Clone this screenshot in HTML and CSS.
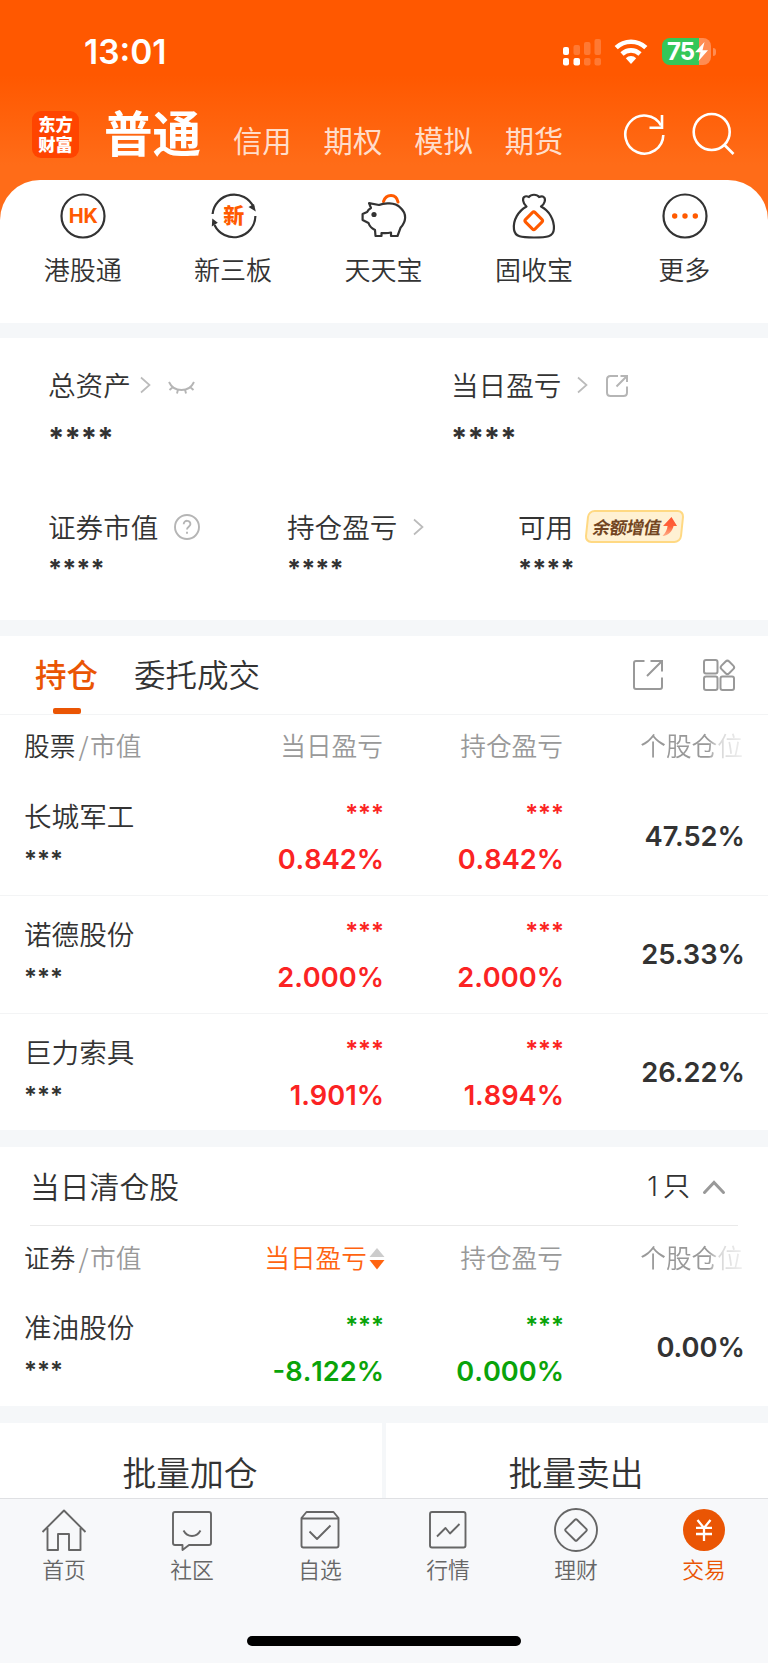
FILE: index.html
```html
<!DOCTYPE html>
<html lang="zh-CN">
<head>
<meta charset="utf-8">
<title>交易</title>
<link rel="stylesheet" href="styles.css">
</head>
<body>
<div class="app">
  <header class="hero">
    <div class="status">
      <span class="time">13:01</span>
      <div class="status-icons">
        <svg width="39" height="28" viewBox="0 0 39 28" fill="#fff"><rect x="1" y="9" width="6" height="8" rx="2"/><g opacity=".2"><rect x="11.500" y="7" width="6.500" height="10" rx="2"/><rect x="22" y="4" width="6.500" height="13" rx="2"/><rect x="32.500" y="1" width="6.500" height="16" rx="2"/><rect x="22" y="20" width="6.500" height="7.500" rx="2"/><rect x="32.500" y="20" width="6.500" height="7.500" rx="2"/></g><rect x="1" y="20" width="6" height="7.500" rx="2"/><rect x="11.500" y="20" width="6.500" height="7.500" rx="2"/></svg>
        <svg class="wifi" width="34" height="26" viewBox="0 0 34 26"><g fill="none" stroke="#fff" stroke-width="4.600"><path d="M2.200 8.700a21.500 21.500 0 0 1 29.600 0"/><path d="M8 15a13 13 0 0 1 18 0"/></g><path fill="#fff" d="M11.800 19.200a7.500 7.500 0 0 1 10.400 0L17 25z"/></svg>
        <div class="battery"><span>75</span><svg width="13" height="19" viewBox="0 0 13 19"><path fill="#fff" d="M9.500 0 0 10.300h5.500L3.500 19 13 8.300H7.500z"/></svg></div><i class="battery-tip"></i>
      </div>
    </div>
    <div class="topnav">
      <div class="logo">东方<br>财富</div>
      <b class="current">普通</b>
      <nav class="modes"><span>信用</span><span>期权</span><span>模拟</span><span>期货</span></nav>
      <svg class="refresh" width="44" height="44" viewBox="0 0 44 44" fill="none" stroke="#fff" stroke-width="2.600"><path d="M40.300 23A19 19 0 1 1 38 13.500"/><path d="M39 3v12.800H26.500"/></svg>
      <svg width="44" height="44" viewBox="0 0 44 44" fill="none" stroke="#fff" stroke-width="2.600"><circle cx="19.700" cy="20" r="18"/><path d="m32 32.500 9.500 9.500"/></svg>
    </div>
  </header>

  <section class="shortcuts">
    <div class="shortcut">
      <svg viewBox="0 0 46 46"><circle cx="23" cy="23" r="21.500" fill="none" stroke="#333" stroke-width="2.200"/><text x="23.300" y="30.300" class="hk">HK</text></svg><span>港股通</span></div>
    <div class="shortcut">
      <svg viewBox="0 0 46 46"><g fill="none" stroke="#333" stroke-width="2.200"><path d="M1.600 21A21.500 21.500 0 0 1 42.500 14"/><path d="M44.400 23A21.500 21.500 0 0 1 3.500 32"/></g><path fill="#333" d="m37.500 14 5.500-3 1.800 7.500zM.8 33.500 1.300 25.500l5.500 4.200z"/><text x="22.800" y="30.200" class="xin">新</text></svg><span>新三板</span></div>
    <div class="shortcut">
      <svg viewBox="0 0 46 46"><path fill="none" stroke="#ff5a00" stroke-width="3" stroke-linecap="round" d="M22.500 8.500C25 1 35 0 37 9"/><path fill="none" stroke="#333" stroke-width="2.200" stroke-linejoin="round" d="M8 10.200 18 12c5-2.300 16-2.700 21 2.300 7.500 6.500 6 14.500.5 20.500L36.500 43H30v-3.500c-3 .8-6.500.8-9.500.5V43h-6l-.5-6c-4-2-5.500-4-6.500-7L1.600 27v-6l4.500-2C7 17 8.500 15.800 10 15z"/><circle cx="13" cy="21.500" r="2.600" fill="#333"/></svg><span>天天宝</span></div>
    <div class="shortcut">
      <svg viewBox="0 0 46 46" fill="none" stroke-linejoin="round"><path stroke="#333" stroke-width="2.200" d="M15.500 13.500c-4-3.200-4.500-9-1.500-10 1.400-.6 3 0 4 .5 2-3 8-3 10 0 1.500-.7 3.500-1 4.700 0 2.600 2 .8 7.500-2.700 9.500 8 4 13.400 13 12.900 22.500-.5 8-7 8.500-19.900 8.500S4 44 3 36.500C1.700 27 7.500 18 15.500 13.500z"/><rect x="16" y="21" width="13.500" height="13.500" rx="2" transform="rotate(45 22.750 27.750)" stroke="#ff5a00" stroke-width="3"/></svg><span>固收宝</span></div>
    <div class="shortcut">
      <svg viewBox="0 0 46 46"><circle cx="23" cy="23" r="21.500" fill="none" stroke="#333" stroke-width="2.200"/><g fill="#ff5a00"><circle cx="12.700" cy="23" r="2.700"/><circle cx="23" cy="23" r="2.700"/><circle cx="33.300" cy="23" r="2.700"/></g></svg><span>更多</span></div>
  </section>

  <section class="assets">
    <div class="asset-top">
      <div class="asset">
        <div class="label">总资产<svg class="chev" viewBox="0 0 12 18"><path d="m2 1.500 8.500 7.500L2 16.500"/></svg><svg class="eye" width="27" height="16" viewBox="0 0 27 16"><path d="M1 2c2.500 5.500 7 8 12.500 8S23.500 7.500 26 2M5 7l-3.500 3M10 9.600 9 13.500M17 9.600l1 3.900M22 7l3.500 3"/></svg></div>
        <div class="stars">****</div>
      </div>
      <div class="asset">
        <div class="label">当日盈亏<svg class="chev gap-lg" viewBox="0 0 12 18"><path d="m2 1.500 8.500 7.500L2 16.500"/></svg><svg class="share" width="24" height="24" viewBox="0 0 24 24"><path d="M13 2H5.500Q2 2 2 5.500v13Q2 22 5.500 22h13q3.500 0 3.500-3.500V12.500M15.500 2H22v6M22 2 11.500 12.500"/></svg></div>
        <div class="stars">****</div>
      </div>
    </div>
    <div class="asset-bottom">
      <div class="asset"><div class="label">证券市值<svg class="help" width="28" height="28" viewBox="0 0 28 28"><circle cx="14" cy="14" r="12"/><path d="M10.700 11.200c0-4.600 7-4.400 6.700 0-.2 2.500-3.400 2.600-3.400 5.300"/><path d="M14 18.700v2"/></svg></div><div class="stars small">****</div></div>
      <div class="asset"><div class="label">持仓盈亏<svg class="chev gap-lg" viewBox="0 0 12 18"><path d="m2 1.500 8.500 7.500L2 16.500"/></svg></div><div class="stars small">****</div></div>
      <div class="asset"><div class="label">可用<div class="promo"><em>余额增值</em><svg width="16" height="20" viewBox="0 0 16 20"><defs><linearGradient id="up" x1="0" y1="1" x2="0" y2="0"><stop stop-color="#ffb08a"/><stop offset=".5" stop-color="#ff6238"/><stop offset="1" stop-color="#ff5330"/></linearGradient></defs><path fill="url(#up)" d="M8.500 0 15 9h-3.500C11 14 7.500 18.500 1.500 19 4.500 16 5.500 12 5.500 9H1z"/></svg></div></div><div class="stars small">****</div></div>
    </div>
  </section>

  <section class="positions">
    <div class="tabs">
      <div class="tab active">持仓</div><div class="tab">委托成交</div>
      <svg class="tab-tool" width="32" height="32" viewBox="0 0 32 32"><path d="M12.500 2H4Q2 2 2 4v24q0 2 2 2h24q2 0 2-2V18.500M18.500 2H30v10.500M30 2 15 17"/></svg>
      <svg width="34" height="34" viewBox="0 0 34 34"><rect x="2" y="2" width="13.500" height="13.500" rx="2"/><rect x="2" y="18.500" width="13.500" height="13.500" rx="2"/><rect x="18.500" y="18.500" width="13.500" height="13.500" rx="2"/><rect x="20" y="4" width="10.800" height="10.800" rx="2.500" transform="rotate(45 25.400 9.400)"/></svg>
    </div>
    <div class="thead"><span><b>股票</b><i>/</i>市值</span><span>当日盈亏</span><span>持仓盈亏</span><span class="fade">个股仓位</span></div>
    <div class="row red"><div class="stock">长城军工<i>***</i></div><div class="num"><i>***</i>0.842%</div><div class="num"><i>***</i>0.842%</div><div class="ratio">47.52%</div></div>
    <div class="row red"><div class="stock">诺德股份<i>***</i></div><div class="num"><i>***</i>2.000%</div><div class="num"><i>***</i>2.000%</div><div class="ratio">25.33%</div></div>
    <div class="row red"><div class="stock">巨力索具<i>***</i></div><div class="num"><i>***</i>1.901%</div><div class="num"><i>***</i>1.894%</div><div class="ratio">26.22%</div></div>
  </section>

  <section class="closed">
    <div class="closed-head"><span>当日清仓股</span><span class="count"><span>1</span>只</span><svg width="24" height="15" viewBox="0 0 24 15"><path d="m2.500 12.500 9.500-10 9.500 10"/></svg></div>
    <div class="thead"><span><b>证券</b><i>/</i>市值</span><span class="sorted">当日盈亏<svg width="16" height="22" viewBox="0 0 16 22"><path fill="#ccc" d="m8 0 7.500 9H.5z"/><path fill="#ff6410" d="M.5 12h15L8 21.500z"/></svg></span><span>持仓盈亏</span><span class="fade">个股仓位</span></div>
    <div class="row green"><div class="stock">准油股份<i>***</i></div><div class="num"><i>***</i>-8.122%</div><div class="num"><i>***</i>0.000%</div><div class="ratio">0.00%</div></div>
  </section>

  <div class="batch"><div>批量加仓</div><div>批量卖出</div></div>

  <footer class="dock">
    <nav>
      <div><svg viewBox="0 0 46 46"><path d="M1.500 24 23 2.500 44.500 24M6.500 20v22H17V26h11v16h11.500V20"/></svg>首页</div>
      <div><svg viewBox="0 0 46 46"><path d="M6 4h34q2 0 2 2v29q0 2-2 2H20l-6.500 5v-5H6q-2 0-2-2V6q0-2 2-2zM14.500 22.500c4 7.300 13 7.300 17 0"/></svg>社区</div>
      <div><svg viewBox="0 0 46 46"><path d="M9.500 4h27l5 6v27.500q0 2-2 2h-33q-2 0-2-2V10zM4.500 10.500h37M12.500 23.500l7.500 7.500 13.500-13.500"/></svg>自选</div>
      <div><svg viewBox="0 0 46 46"><rect x="5" y="4" width="35.500" height="35.500" rx="2"/><path d="m12 28.500 8.500-8.500 4.500 5.500L34.500 16"/></svg>行情</div>
      <div><svg viewBox="0 0 46 46"><circle cx="23" cy="22" r="21"/><rect x="15" y="14" width="16" height="16" rx="1.500" transform="rotate(45 23 22)"/></svg>理财</div>
      <div class="on"><svg viewBox="0 0 46 46"><circle class="disc" cx="23" cy="22" r="21"/><path class="yen" d="m16.500 12 6.500 8 6.500-8M23 20v13M15 19.800h16M15 26h16"/></svg>交易</div>
    </nav>
    <div class="home-bar"></div>
  </footer>
</div>
</body>
</html>
```

FILE: styles.css
```css
* { box-sizing: border-box; }
body { margin: 0; font-family: "Noto Sans CJK SC", sans-serif; font-weight: 350; color: #333; background: #fff; }
i { font-style: normal; }
svg { display: block; flex: none; }
.app { width: 768px; height: 1663px; overflow: hidden; display: flex; flex-direction: column; white-space: nowrap; }

.hero { height: 220px; flex: none; background: linear-gradient(#ff5800 0, #ff5800 75px, #ff6c18 165px, #ff6c18); color: #fff; }
.status { height: 101px; padding: 2px 52px 0 84px; display: flex; align-items: center; justify-content: space-between; }
.time { font: 600 33.500px/40px Inter, sans-serif; }
.status-icons { display: flex; align-items: center; height: 40px; }
.wifi { margin-left: 13px; }
.battery { width: 49px; height: 27px; margin-left: 14px; border-radius: 8px; background: linear-gradient(90deg, #34c759 37px, #ff8c52 37px); display: flex; align-items: center; padding-left: 5px; }
.battery span { font: 700 24px/27px Inter, sans-serif; letter-spacing: -1px; width: 28px; }
.battery-tip { width: 3px; height: 8px; margin-left: 2px; border-radius: 0 3px 3px 0; background: #ff8c52; }
.topnav { height: 64px; padding: 2px 32px 0; display: flex; align-items: center; }
.logo { width: 47px; height: 47px; border-radius: 9px; background: #ff4400; padding-top: 3px; text-align: center; font-weight: 900; font-size: 17.300px; line-height: 20px; }
.current { font-weight: 700; font-size: 48.500px; line-height: 60px; margin: -7px 0 0 25px; }
.modes { display: flex; gap: 32px; margin-left: 32px; padding-top: 10px; font-size: 29.300px; line-height: 40px; font-weight: 400; color: rgba(255,255,255,.8); }
.refresh { margin: 0 25px 0 auto; }

.shortcuts { height: 143px; margin-top: -40px; flex: none; background: #fff; border-radius: 40px 40px 0 0; padding: 13px 8px 0; display: grid; grid-template-columns: repeat(5, 1fr); }
.shortcut { display: flex; flex-direction: column; align-items: center; font-size: 26px; line-height: 36px; }
.shortcut svg { width: 46px; height: 46px; margin-bottom: 12px; }
.shortcut span { padding-right: 1px; }
.hk { font: 700 20px Inter, sans-serif; fill: #ff5a00; text-anchor: middle; }
.xin { font: 900 21px "Noto Sans CJK SC", sans-serif; fill: #ff5a00; text-anchor: middle; }

.assets { height: 313px; flex: none; border-top: 15px solid #f5f7f9; border-bottom: 16px solid #f5f7f9; padding: 27px 48px 0; }
.assets svg { fill: none; stroke: #b5b5b5; stroke-width: 1.900; }
.label { height: 38px; display: flex; align-items: center; font-size: 27.600px; line-height: 38px; }
.label svg.chev { width: 12px; height: 18px; margin: 2px 0 0 8px; stroke-width: 1.700; stroke: #bbb; }
.label svg.gap-lg { margin-left: 15px; }
.label .eye { margin: 7px 0 0 17px; }
.label .share { margin: 3px 0 0 17px; stroke-width: 2; }
.label .help { margin: 2px 0 0 15px; }
.asset-top { display: grid; grid-template-columns: 403px 1fr; height: 142px; }
.asset-bottom { display: grid; grid-template-columns: 239px 231px 1fr; }
.stars { font: 700 29.300px/36px Inter, sans-serif; padding-top: 18px; }
.stars.small { font-size: 25.300px; padding-top: 6px; }
.promo { width: 97px; height: 33px; margin: 0 0 0 13px; border: 2px solid #ffd983; border-radius: 7px; background: #fff1d3; transform: skewX(-6deg); display: flex; align-items: center; padding-left: 5px; }
.promo em { font-size: 17.500px; font-weight: 700; font-style: normal; line-height: 28px; color: #724522; letter-spacing: -.5px; transform: skewX(-4deg); }
.promo svg { stroke: none; margin-left: 1px; }

.tabs { height: 79px; border-bottom: 1px solid #f3f4f5; padding: 0 32px 0 35px; display: flex; align-items: center; font-size: 31.500px; }
.tab { height: 78px; line-height: 75px; margin-right: 36px; display: flex; flex-direction: column; align-items: center; }
.tab.active { color: #ea5504; font-weight: 500; }
.tab.active::after { content: ""; width: 28px; height: 6px; border-radius: 2px; background: #ea5504; margin-top: -3px; }
.tabs svg { fill: none; stroke: #999; stroke-width: 2; }
.tab-tool { margin: 0 38px 0 auto; }
.thead, .row { display: grid; grid-template-columns: 204px 155px 180px 180px; padding: 0 24px; justify-content: start; }
.thead { height: 63px; font-size: 25.700px; line-height: 60px; color: #999; }
.thead > span { display: flex; justify-content: flex-end; }
.thead > span:first-child { justify-content: flex-start; }
.thead b { font-weight: 350; color: #333; }
.thead i { margin: 0 1.500px 0 3px; }
.thead .fade { -webkit-mask-image: linear-gradient(90deg, #000 145px, rgba(0,0,0,.4) 155px, rgba(0,0,0,.15) 180px); mask-image: linear-gradient(90deg, #000 145px, rgba(0,0,0,.4) 155px, rgba(0,0,0,.15) 180px); }
.thead .sorted { color: #ff6410; margin-right: -2px; }
.sorted svg { margin: 21px 0 0 2px; }
.row { height: 118px; border-bottom: 1px solid #f3f4f5; }
.row:last-child { border-bottom: 0; height: 116px; }
.stock { font-size: 27.600px; line-height: 36px; padding-top: 19px; }
.stock i { display: block; font: 600 24px/30px Inter, sans-serif; padding-top: 12px; }
.num { text-align: right; font: 600 27.200px/36px Inter, sans-serif; font-kerning: none; padding-top: 18px; margin-right: -1px; }
.num i { display: block; height: 46px; padding-top: 3px; font-size: 24px; line-height: 30px; }
.red .num { color: #fb2323; }
.green .num { color: #0aa30a; }
.ratio { text-align: right; font: 600 27.300px/118px Inter, sans-serif; margin-right: -2px; }

.closed { border-top: 17px solid #f5f7f9; border-bottom: 17px solid #f5f7f9; flex: none; height: 293px; }
.closed-head { height: 79px; margin: 0 30px; padding-right: 12px; border-bottom: 1px solid #eaeaea; display: flex; align-items: center; font-size: 29.800px; line-height: 76px; }
.closed-head > span { margin-top: -3px; }
.closed-head .count { margin-left: auto; font-size: 27px; }
.closed .thead { padding-top: 1px; }
.count span { font: 300 27px Inter, sans-serif; margin-right: 5px; }
.closed-head svg { fill: none; stroke: #999; stroke-width: 3; stroke-linecap: round; margin: 2px 0 0 12px; }
.closed .row .num { padding-top: 19px; }

.batch { height: 75px; flex: none; display: grid; grid-template-columns: 1fr 1fr; gap: 4px; background: #f5f7f9; font-size: 33.800px; line-height: 97px; text-align: center; overflow: hidden; }
.batch div { background: #fff; padding-right: 2px; }
.dock { height: 166px; flex: none; background: #f7f8fa; border-top: 1px solid #dfe0e3; }
.dock nav { display: grid; grid-template-columns: repeat(6, 1fr); height: 137px; padding-top: 9px; }
.dock nav div { display: flex; flex-direction: column; align-items: center; font-size: 21.800px; line-height: 32px; color: #666; }
.dock nav svg { width: 46px; height: 46px; margin-bottom: -1px; fill: none; stroke: #666; stroke-width: 1.900; stroke-linejoin: round; }
.dock nav div.on { color: #ea5504; }
.dock nav .disc { fill: #ea5504; stroke: none; }
.dock nav .yen { stroke: #fff; stroke-width: 2.300; }
.home-bar { width: 274px; height: 10px; border-radius: 5px; background: #000; margin: 0 auto; }
```
